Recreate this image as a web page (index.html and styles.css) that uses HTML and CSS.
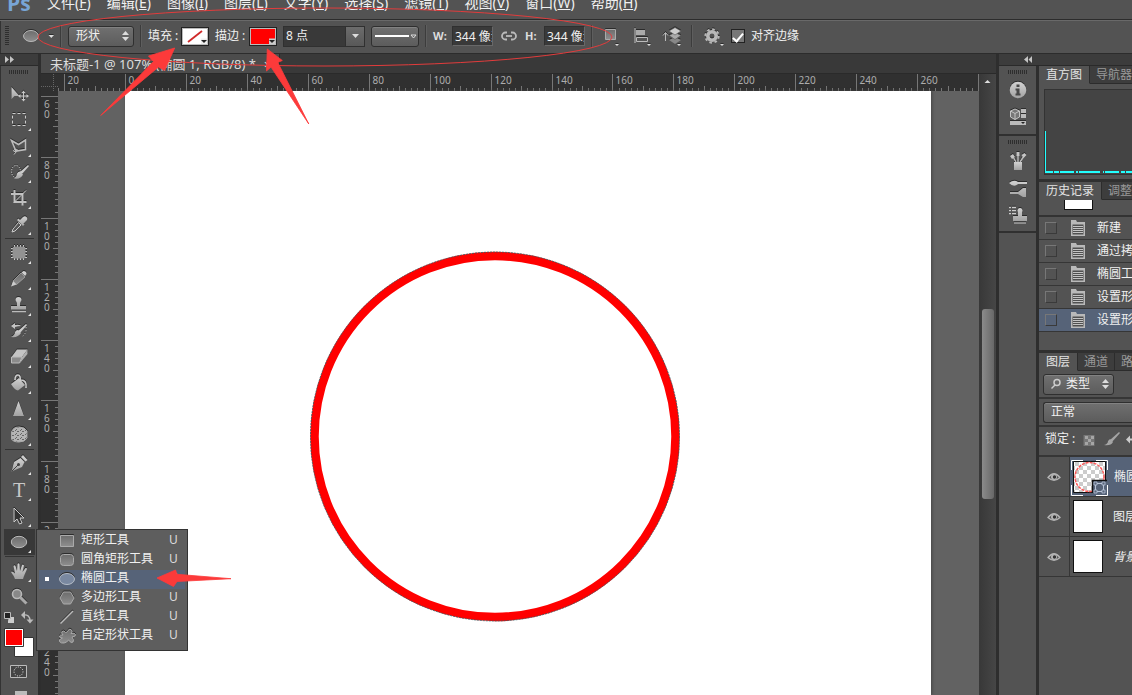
FILE: index.html
```html
<!DOCTYPE html>
<html lang="zh-CN">
<head>
<meta charset="utf-8">
<title>未标题-1</title>
<link rel="stylesheet" href="styles.css">
</head>
<body>
<svg class="defs" aria-hidden="true">
  <defs>
    <linearGradient id="metal" x1="0" y1="0" x2="0" y2="1"><stop offset="0" stop-color="#6c6c6c"/><stop offset="1" stop-color="#8e8e8e"/></linearGradient>
    <linearGradient id="light" x1="0" y1="0" x2="0" y2="1"><stop offset="0" stop-color="#d2d2d2"/><stop offset="1" stop-color="#a2a2a2"/></linearGradient>
    <pattern id="checker" width="8" height="8" patternUnits="userSpaceOnUse"><path d="M0 0h8v8H0z" fill="#fff"/><path d="M0 0h4v4H0zM4 4h4v4H4z" fill="#ccc"/></pattern>
    <pattern id="sponge" width="5" height="4" patternUnits="userSpaceOnUse"><path d="M0 0h5v4H0z" fill="#b4b4b4"/><path d="M0 0h1v1H0zM2 1h2v1H2zM1 3h1v1H1z" fill="#666"/></pattern>
    <symbol id="doc" viewBox="0 0 14 16"><path d="M0 0h5l1 2h8v14H0z" fill="#b9b9b9"/><path d="M1.500 4.500h11v10h-11z" fill="#505050"/><path d="M2 6.500h10M2 8.500h10M2 10.500h10M2 12.500h10" stroke="#c4c4c4"/></symbol>
    <symbol id="eye" viewBox="0 0 14 12"><path d="M1 6.500Q7 -1 13 6.500Q7 12 1 6.500z" fill="#555" stroke="#b5b5b5" stroke-width="1.300"/><circle cx="7" cy="6" r="3" fill="#b5b5b5"/><circle cx="7.500" cy="6" r="1.700" fill="#333"/></symbol>
  </defs>
</svg>

<div class="app">
  <nav class="menubar">
    <span class="logo">Ps</span>
    <a href="#">文件(<u>F</u>)</a><a href="#">编辑(<u>E</u>)</a><a href="#">图像(<u>I</u>)</a><a href="#">图层(<u>L</u>)</a><a href="#">文字(<u>Y</u>)</a><a href="#">选择(<u>S</u>)</a><a href="#">滤镜(<u>T</u>)</a><a href="#">视图(<u>V</u>)</a><a href="#">窗口(<u>W</u>)</a><a href="#">帮助(<u>H</u>)</a>
  </nav>

  <div class="options">
    <span class="grip-v"></span>
    <button class="opt-tool" aria-label="椭圆工具"><svg class="raised" width="39" height="20"><ellipse cx="16" cy="10" rx="7.500" ry="5.500" fill="url(#metal)" stroke="#b9b9b9"/><path d="M33.500 9h5.500l-2.700 3z" fill="#ddd"/></svg></button>
    <span class="rule"></span>
    <span class="field select-box mode"><select aria-label="工具模式"><option>形状</option></select><svg width="7" height="10"><path d="M0 4L3.500 0 7 4zM0 6l3.500 4L7 6z" fill="#ddd"/></svg></span>
    <span class="rule"></span>
    <label class="name" for="fill">填充 :</label>
    <button class="swatch" id="fill"><svg width="28" height="19"><path d="M2 2h24v15H2z" fill="#fff"/><path d="M7 15L21 4" stroke="#d02a2a" stroke-width="1.800"/><path d="M20 11.500h6V17h-6z" fill="#eee"/><path d="M20 13h6l-3 3z" fill="#222"/></svg></button>
    <label class="name wide" for="stroke">描边 :</label>
    <button class="swatch" id="stroke"><svg width="28" height="19"><path d="M2 2h24v15H2z" fill="red"/><path d="M20 11.500h6V17h-6z" fill="#ccc"/><path d="M20 13h6l-3 3z" fill="#222"/></svg></button>
    <span class="combo"><input aria-label="描边宽度" value="8 点"><button aria-label="展开"><svg width="7" height="4"><path d="M0 0h7L3.500 4z" fill="#ddd"/></svg></button></span>
    <button class="field line-type" aria-label="描边类型"><svg width="46" height="19"><path d="M3 9h34" stroke="#fff" stroke-width="2"/><path d="M39 8h5l-2.500 3z" fill="none" stroke="#ddd"/></svg></button>
    <span class="rule"></span>
    <label class="dim" for="w">W:</label><input class="num" id="w" value="344 像素">
    <svg class="link" width="20" height="12"><g fill="none" stroke="#bbb" stroke-width="1.800"><path d="M8 2.500H6.500a3.500 3.500 0 0 0 0 7H8M12 2.500h1.500a3.500 3.500 0 0 1 0 7H12"/><path d="M7 6h6"/></g></svg>
    <label class="dim" for="h">H:</label><input class="num" id="h" value="344 像素">
    <span class="rule"></span>
    <button aria-label="路径操作"><svg class="raised" width="24" height="22"><path d="M6.500 4.500h10v10h-10z" fill="url(#metal)" stroke="#aaa"/><path d="M16 19h4l-2 2z" fill="#ddd"/></svg></button>
    <button aria-label="路径对齐方式"><svg class="raised" width="26" height="22"><path d="M6 3v15" stroke="#ccc"/><path d="M7 5h9v5H7z" fill="#aaa"/><path d="M7.500 12.500h11v4h-11z" fill="#555" stroke="#bbb"/><path d="M18 19h4l-2 2z" fill="#ddd"/></svg></button>
    <button aria-label="路径排列方式"><svg class="raised" width="24" height="22"><path d="M4.500 16V8M2 10.500l2.500-3 2.500 3" stroke="#bbb" fill="none"/><path d="M8 15l6-3 6 3-6 4z" fill="#888"/><path d="M8 10.500l6-3 6 3-6 4z" fill="#aaa" stroke="#555" stroke-width=".6"/><path d="M8 6l6-3.500 6 3.500-6 4z" fill="#ccc" stroke="#555" stroke-width=".6"/><path d="M16 19h4l-2 2z" fill="#ddd"/></svg></button>
    <span class="rule"></span>
    <button aria-label="设置"><svg class="raised" width="26" height="22"><circle cx="13" cy="11" r="4.200" fill="none" stroke="#b8b8b8" stroke-width="3.600"/><circle cx="13" cy="11" r="6.700" fill="none" stroke="#b8b8b8" stroke-width="2" stroke-dasharray="2.600 2.660"/><path d="M21 19h4l-2 2z" fill="#ddd"/></svg></button>
    <input type="checkbox" class="tick" id="snap" checked><label for="snap">对齐边缘</label>
  </div>

  <div class="workspace">
    <aside class="toolbox">
      <div class="strip"><svg width="9" height="7"><path d="M0 0l4 3.500L0 7zM5 0l4 3.500L5 7z" fill="#c4c4c4"/></svg></div>
      <div class="grip"></div>
      <button class="tool" aria-label="移动工具"><svg><path d="M11.500 6v12l3-3h5z" fill="url(#light)"/><path d="M23.500 10.500v9M19 15h9" stroke="#c8c8c8"/><path d="M21.500 12l2-2.500 2 2.500zM21.500 18l2 2.500 2-2.500zM20.500 13L18 15l2.500 2zM26.500 13l2.500 2-2.500 2z" fill="#c8c8c8"/></svg></button>
      <button class="tool more" aria-label="矩形选框工具"><svg><path d="M12.500 6.500h13v12h-13z" fill="none" stroke="#ccc" stroke-dasharray="3 2"/></svg></button>
      <button class="tool more" aria-label="套索工具"><svg><path d="M11.500 7.500L18.500 11.500 25.500 7v9.500L16 18z" fill="none" stroke="#bcbcbc" stroke-width="1.600"/><path d="M15 16.500q3-1 2.500 1T14 18.500q-1.500-1.500 1-2M16 19l-2 2.500" fill="none" stroke="#bcbcbc"/></svg></button>
      <button class="tool more" aria-label="快速选择工具"><svg><ellipse cx="16" cy="12.500" rx="4.500" ry="6" fill="none" stroke="#ddd" stroke-dasharray="1 1.500"/><path d="M28 6l1 1-7 8-2-2z" fill="#ccc"/><path d="M20 12.500l3 3q-2 5-9 4 3-2 3-5 1-2 3-2z" fill="url(#light)"/></svg></button>
      <button class="tool more" aria-label="裁剪工具"><svg><path d="M14.500 5v12h12M11 9h11.500v11.500" fill="none" stroke="#bfbfbf" stroke-width="2"/><path d="M14 17.500L26 5.500" stroke="#ccc"/></svg></button>
      <button class="tool more" aria-label="吸管工具"><svg><path d="M20 9l3-3q2-1.500 3.500 0t0 3.500l-3 3 1 1-1.500 1.500-6-6 1.500-1.500z" fill="url(#light)"/><path d="M18.500 11.500l2.500 2.500-6 6-3 1 1-3z" fill="#555" stroke="#ccc"/></svg></button>
      <hr>
      <button class="tool more" aria-label="修补工具"><svg><path d="M14.500 5v15M17.500 5v15M20.500 5v15M23.500 5v15M11 8.500h16M11 11.500h16M11 14.500h16M11 17.500h16" stroke="#c8c8c8"/><rect x="12.500" y="6.500" width="13" height="12" rx="2" fill="#929292"/></svg></button>
      <button class="tool more" aria-label="铅笔工具"><svg><path d="M21.500 6.500l2-1.500q3 0 3 3l-1.500 2z" fill="#d0d0d0"/><path d="M21 7l4 4-8.500 7.500-3.500-3.500z" fill="url(#metal)" stroke="#aaa" stroke-width=".8"/><path d="M13 15l3.500 3.500L11 20.500z" fill="#ccc"/></svg></button>
      <button class="tool more" aria-label="仿制图章工具"><svg><path d="M18.500 5a3 3 0 0 1 3 3l-1.500 3v3h6v3.500H11V14h6v-3l-1.500-3a3 3 0 0 1 3-3z" fill="url(#light)"/><path d="M12 19.500h14" stroke="#bbb" stroke-width="1.500"/></svg></button>
      <button class="tool more" aria-label="历史记录画笔工具"><svg><path d="M11 8l4-3v2q4-1 6 1-3 0-6 1v2z" fill="#c4c4c4"/><path d="M26 6l1 1-7 8-2-2z" fill="#ccc"/><path d="M18 12l3 3q-3 5-10 4 4-2 4-5 1-2 3-2z" fill="url(#light)"/><path d="M26 9q1 7-5 10" stroke="#ccc" fill="none" stroke-dasharray="1 2"/></svg></button>
      <button class="tool more" aria-label="橡皮擦工具"><svg><path d="M17 5.500h10.500L22 13H11.500z" fill="#c5c5c5"/><path d="M22 13l5.500-7.500v4.500L20 19z" fill="#b0b0b0"/><path d="M11.500 13H22l-2.500 6h-8z" fill="#8c8c8c" stroke="#bbb"/></svg></button>
      <button class="tool more" aria-label="油漆桶工具"><svg><path d="M11 14l8-6 6 7-7 5.500q-3 0-7-6.500z" fill="url(#light)"/><path d="M15 10q0-5 3-5t2 7M21 10q6 0 5 8" fill="none" stroke="#ccc" stroke-width="1.600"/></svg></button>
      <button class="tool more" aria-label="锐化工具"><svg><path d="M18.500 5L24 20H13z" fill="url(#light)"/></svg></button>
      <button class="tool more" aria-label="海绵工具"><svg><path d="M11.500 10Q13 5 19 5t8 4v7q-2 4-8 4t-7.500-3z" fill="url(#sponge)" stroke="#aaa"/></svg></button>
      <hr>
      <button class="tool more" aria-label="钢笔工具"><svg><path d="M21 6l2-2 4.500 5-2 1.500z" fill="#ccc"/><path d="M20.500 7l4 4-2.500 5-10.500 4.500L14 11z" fill="url(#light)"/><path d="M12 20l6-6" stroke="#444"/><circle cx="18.500" cy="13.500" r="1.500" fill="#444"/></svg></button>
      <button class="tool more letter" aria-label="文字工具">T</button>
      <button class="tool more" aria-label="路径选择工具"><svg><path d="M14 5v14l3-3 2.500 5 2.500-1-2-5h4z" fill="#333" stroke="#ccc"/></svg></button>
      <div class="tool-group">
        <button class="tool more active" aria-label="椭圆工具"><svg><ellipse cx="19" cy="13" rx="7.700" ry="5.700" fill="url(#metal)" stroke="#bbb"/></svg></button>
        <ul class="flyout">
          <li><svg><path d="M1.500 3.500h13v11h-13z" fill="url(#metal)" stroke="#aaa"/></svg><span>矩形工具</span><kbd>U</kbd></li>
          <li><svg><rect x="1.500" y="3.500" width="13" height="11" rx="3" fill="url(#metal)" stroke="#aaa"/></svg><span>圆角矩形工具</span><kbd>U</kbd></li>
          <li class="current"><svg><ellipse cx="8" cy="9" rx="7.500" ry="5.500" fill="#7988a0" stroke="#b5bdc8"/></svg><span>椭圆工具</span><kbd>U</kbd></li>
          <li><svg><path d="M1 9l3.500-6h7L15 9l-3.500 6h-7z" fill="url(#metal)" stroke="#aaa"/></svg><span>多边形工具</span><kbd>U</kbd></li>
          <li><svg><path d="M1.500 15.500L14 3" stroke="#bbb" stroke-width="1.500"/></svg><span>直线工具</span><kbd>U</kbd></li>
          <li><svg><path d="M3 4.500Q5 3 6.500 5.500 8 6 9 3.500 11 1 12.500 3T12 6.500q4-1 4.500 1T13 10q2.500 3 1 5t-4.500-2Q8 15.500 5 16t-4.500-1.500T3.500 11Q0 10.500.500 9T4 8Q2 6 3 4.500z" fill="url(#metal)" stroke="#aaa"/></svg><span>自定形状工具</span><kbd>U</kbd></li>
        </ul>
      </div>
      <hr>
      <button class="tool more" aria-label="抓手工具"><svg><path d="M15 21q-1-3-4-7 1-1.500 4 1.500L13.500 8q1-1.500 2 0l1.500 5 .5-7q1-1.500 2 0l.5 7L22 7q1-1 2 .500L22.500 14l3-4q1.500-.5 1.500 1l-3 7-1 3z" fill="url(#light)"/></svg></button>
      <button class="tool" aria-label="缩放工具"><svg><circle cx="17" cy="10" r="4.500" fill="#888" stroke="#b8b8b8" stroke-width="1.600"/><path d="M20.500 13.500l6 6" stroke="#aaa" stroke-width="3"/></svg></button>
      <svg class="mini" width="38" height="17"><path d="M9 7h5v6H8V11z" fill="#ccc"/><path d="M4.500 2.500h6v6h-6z" fill="#222" stroke="#bbb"/><path d="M23 5q7-1 7 6" fill="none" stroke="#bbb" stroke-width="1.500"/><path d="M25 1v8l-4-4zM26.500 9.500h7l-3.500 4z" fill="#bbb"/></svg>
      <svg class="colors" width="38" height="30"><path d="M14.500 10.500h19v19h-19z" fill="#fff" stroke="#333"/><path d="M4.500 1.500h19v18h-19z" fill="#fff" stroke="#333"/><path d="M6 3h16v15H6z" fill="red"/></svg>
      <svg class="modes" width="38" height="46"><path d="M10.500 8.500h16v12h-16z" fill="#444" stroke="#bbb"/><circle cx="18.500" cy="14.500" r="4.500" fill="none" stroke="#eee" stroke-dasharray="1 1.500"/><path d="M15 34h12v10H15z" fill="#bbb"/></svg>
    </aside>

    <main class="document">
      <div class="tabs-row"><div class="doc-tab"><span>未标题-1 @ 107% (椭圆 1, RGB/8) *</span><button aria-label="关闭">×</button></div></div>
      <div class="stage">
        <svg class="corner" width="17" height="17"><path d="M0 12.500h17M12.500 0v17" stroke="#666" stroke-dasharray="1 1"/></svg>
        <svg class="ruler-x" id="ruler-x"></svg>
        <svg class="ruler-y" id="ruler-y"></svg>
        <div class="pasteboard">
          <div class="page"><svg><circle cx="370" cy="345.500" r="180.500" fill="none" stroke="red" stroke-width="8.500"/><circle cx="370" cy="345.500" r="184.500" fill="none" stroke="#27666c" stroke-dasharray="2 1" stroke-width=".8"/></svg></div>
        </div>
        <div class="scrollbar"><svg width="17" height="16"><path d="M5.500 9h6L8.500 6z" fill="#ddd"/></svg><div class="thumb"></div></div>
      </div>
    </main>

    <section class="side">
      <div class="strip right"><svg width="8" height="7"><path d="M4 0L0 3.500 4 7zM8 0L4.500 3.500 8 7z" fill="#c4c4c4"/></svg></div>
      <div class="side-body">
        <div class="dock">
          <div class="dock-group info">
            <div class="grip"></div>
            <button aria-label="信息"><svg><circle cx="19" cy="10" r="8.300" fill="url(#light)"/><path d="M17.500 4.500h3v2.500h-3zM16.500 8.500h4v5h1v2h-5v-2h1v-3h-1z" fill="#484848"/></svg></button>
            <button aria-label="属性"><svg><path d="M11.500 6l4.500-2 4.500 2v6L16 14.500 11.500 12z" fill="#777" stroke="#c4c4c4"/><path d="M11.500 6L16 8.500 20.500 6M16 8.500v6" stroke="#c4c4c4" fill="none"/><path d="M22 4h5v4h-5zM22 9h5v4h-5zM11 16h16v4H11z" fill="#bbb"/><path d="M22 17h4l-2 2z" fill="#222"/></svg></button>
          </div>
          <div class="dock-group brushes">
            <div class="grip"></div>
            <button aria-label="画笔预设"><svg><path d="M15 11h8v8h-8z" fill="url(#light)"/><path d="M17 11l-4-7M19 11V2M21 11l4-6" stroke="#bbb" stroke-width="1.500"/><path d="M11 5l3-2 2 3-3 2zM17.500 1h3v4h-3zM22.500 4l3-2 2 2-3 3z" fill="#c4c4c4"/></svg></button>
            <button aria-label="画笔"><svg><path d="M10 5q5-4 9-1h9v2h-9q-4 4-9-1zM11 14h8l5-4h3v9h-3l-5-3h-8z" fill="url(#light)"/></svg></button>
            <button aria-label="仿制源"><svg><path d="M10 2.500h2M13 2.500h4M10 5.500h2M13 5.500h4M10 8.500h2M13 8.500h4" stroke="#ccc" stroke-width="1.500"/><path d="M21 3a2.500 2.500 0 0 1 2 4v4h5v5H14v-5h5V7a2.500 2.500 0 0 1 2-4z" fill="url(#light)"/><path d="M15 18h12" stroke="#ccc"/></svg></button>
          </div>
        </div>

        <div class="panels">
          <section class="panel histogram">
            <div class="tabs"><button class="on">直方图</button><button>导航器</button></div>
            <div class="graph"><svg><path d="M.5 41v42" stroke="#2ff"/><path d="M0 82h8M9 82h5M15 82h14M31 82h2M34 82h21M58 82h1M60 82h14M76 82h4M81 82h20" stroke="#2ff" stroke-width="2"/></svg></div>
          </section>
          <section class="panel history">
            <div class="tabs"><button class="on">历史记录</button><button>调整</button></div>
            <div class="snapshot"><i></i></div>
            <ul>
              <li><i></i><svg><use href="#doc"/></svg><span>新建</span></li>
              <li><i></i><svg><use href="#doc"/></svg><span>通过拷贝的图层</span></li>
              <li><i></i><svg><use href="#doc"/></svg><span>椭圆工具</span></li>
              <li><i></i><svg><use href="#doc"/></svg><span>设置形状图层填充</span></li>
              <li class="current"><i></i><svg><use href="#doc"/></svg><span>设置形状描边</span></li>
            </ul>
          </section>
          <section class="panel layers">
            <div class="tabs"><button class="on">图层</button><button>通道</button><button>路径</button></div>
            <div class="row filter"><span class="field select-box kind"><svg width="12" height="12"><circle cx="7" cy="4.500" r="3" fill="none" stroke="#ccc" stroke-width="1.500"/><path d="M5 7l-3.500 3.500" stroke="#ccc" stroke-width="1.500"/></svg><select aria-label="类型"><option>类型</option></select><svg width="7" height="10"><path d="M0 4L3.500 0 7 4zM0 6l3.500 4L7 6z" fill="#ddd"/></svg></span></div>
            <div class="row blend"><span class="field select-box"><select aria-label="混合模式"><option>正常</option></select></span></div>
            <div class="row lock"><span>锁定 :</span><svg width="50" height="18"><path d="M.5 5h11v11H.500z" fill="#777"/><path d="M2 6h3v3H2zM8 6h3v3H8zM5 9h3v3H5zM2 12h3v3H2zM8 12h3v3H8z" fill="#a5a5a5"/><path d="M36 2l1 1-8 9-2-2zM27 9l3 3q-2 4-9 3 4-1 4-4z" fill="#a5a5a5"/><path d="M43 9.500l4-4v3h4v2h-4v3z" fill="#ccc"/></svg></div>
            <ul>
              <li class="current"><svg class="eye"><use href="#eye"/></svg><svg class="thumb-shape" width="38" height="38"><path d="M2.500 3.500h32v31h-32z" fill="url(#checker)" stroke="#111"/><circle cx="18.500" cy="19" r="14.500" fill="none" stroke="#f55" stroke-width="1.400" stroke-dasharray="3 1"/><path d="M21 22h15v15H21z" fill="#566378"/><path d="M36 22.500H21.500V35" stroke="#111" stroke-width="1.500" fill="none"/><path d="M24.500 25.500h8v8h-8z" fill="none" stroke="#b8c4d8"/><path d="M23 24h3v3h-3zM31 24h3v3h-3zM23 32h3v3h-3zM31 32h3v3h-3z" fill="#566378" stroke="#b8c4d8" stroke-width=".8"/><path d="M.5 12V2.500H12M25 2.500h11.500V12M.5 27v10.500H12M25 37.500h11.500V27" fill="none" stroke="#fff"/></svg><span>椭圆 1</span></li>
              <li><svg class="eye"><use href="#eye"/></svg><i></i><span>图层 1</span></li>
              <li><svg class="eye"><use href="#eye"/></svg><i></i><span><em>背景</em></span></li>
            </ul>
          </section>
        </div>
      </div>
    </section>
  </div>

  <svg class="notes" width="1132" height="695" aria-hidden="true">
    <ellipse cx="325" cy="37" rx="287" ry="29" fill="none" stroke="#e23c3c"/>
    <g fill="#fc3a3a" stroke="#fc3a3a" stroke-width=".8" stroke-linejoin="round">
      <path d="M174.700 48L148.500 56l5 5.500-52.800 54L158.500 67l6 3.500z"/>
      <path d="M267.300 49l15 11.500-4.500 2 31 61.500L271 67l-4.500 4z"/>
      <path d="M157 578l18.500-8 1.500 4.300 54 4.400-54 2.800-3.500 5z"/>
    </g>
  </svg>
</div>
<script src="rulers.js"></script>
</body>
</html>
```
FILE: styles.css
```css
* { box-sizing: border-box; }
body {
  margin: 0;
  overflow: hidden;
  background: #535353;
  color: #f0f0f0;
  font: 12px/16px "Noto Sans", "Noto Sans CJK SC", sans-serif;
}
button, input, select { font: inherit; color: inherit; margin: 0; padding: 0; border: 0; background: none; border-radius: 0; min-width: 0; }
select { appearance: none; outline: 0; }
ul { list-style: none; margin: 0; padding: 0; }
svg { display: block; flex: none; }
.defs { position: absolute; width: 0; height: 0; }
.raised, .tool svg, .flyout svg, .dock svg { filter: drop-shadow(0 -1px 0 #2c2c2c); }

.app { position: relative; display: flex; flex-direction: column; height: 100vh; overflow: hidden; }

.menubar {
  display: flex; align-items: flex-end; gap: 16px;
  height: 20px; padding: 0 0 4px 7px; overflow: hidden;
  font-size: 14px; line-height: 24px; border-bottom: 1px solid #2c2c2c; flex: none;
}
.menubar a { color: #f0f0f0; text-decoration: none; white-space: nowrap; }
.logo { width: 24px; color: #78a5d6; font: bold 21px/24px "Open Sans", sans-serif; }

.options {
  display: flex; align-items: center; gap: 6px; flex: none;
  height: 34px; padding: 0 0 2px 5px; overflow: hidden; white-space: nowrap;
  border-top: 1px solid #696969; border-bottom: 1px solid #2c2c2c; box-shadow: inset 1px 0 #333;
}
.options > * { flex: none; }
.grip-v { width: 4px; height: 20px; background: repeating-linear-gradient(#2e2e2e 0 1px, #535353 1px 2px); }
.rule { width: 2px; height: 22px; background: #3c3c3c; border-right: 1px solid #5e5e5e; }
.field {
  display: flex; align-items: center; height: 21px;
  border: 1px solid #2f2f2f; border-radius: 3px;
  background: linear-gradient(#707070, #5c5c5c); box-shadow: inset 0 1px #828282;
}
.select-box select { flex: 1; }
.mode { width: 66px; padding: 0 4px 0 7px; }
.name { width: 27px; }
.name.wide { width: 28px; }
.swatch { width: 28px; height: 19px; background: #bbb; border: 1px solid #222; overflow: hidden; }
.swatch svg { margin: -1px; }
.combo { display: flex; width: 82px; height: 21px; border: 1px solid #303030; background: #393939; }
.combo input { flex: 1; padding-left: 2px; }
.combo button { display: grid; place-items: center; width: 19px; background: linear-gradient(#6c6c6c, #585858); border-left: 1px solid #303030; }
.line-type { width: 48px; }
.dim { width: 13px; font-size: 11px; font-weight: bold; color: #ddd; }
.num { width: 41px; height: 20px; padding: 0 0 0 2px; background: #393939; border: 1px solid #303030; border-right-color: #686868; border-bottom-color: #686868; }
.tick { appearance: none; width: 14px; height: 14px; border: 1px solid #222; background: #777; display: grid; place-items: center; }
.tick:checked::before { content: ""; width: 4px; height: 9px; border: solid #fff; border-width: 0 2px 2px 0; transform: rotate(40deg); }

.workspace { display: flex; flex: 1; min-height: 0; background: #2e2e2e; gap: 3px; }
.strip { display: flex; align-items: center; height: 12px; padding-left: 5px; background: #3c3c3c; border-bottom: 1px solid #2a2a2a; flex: none; }
.strip.right { justify-content: flex-end; padding-right: 100px; }
.grip { flex: none; height: 4px; width: 20px; margin: 4px auto 7px; background: repeating-linear-gradient(90deg, #2e2e2e 0 1px, #535353 1px 2px); }

.toolbox { display: flex; flex-direction: column; width: 38px; background: #535353; box-shadow: inset 1px 0 #333; flex: none; }
.tool { position: relative; flex: none; display: block; width: 38px; height: 26px; }
.tool svg { width: 38px; height: 26px; }
.more::after { content: ""; position: absolute; right: 7px; bottom: 2px; border: solid transparent; border-width: 0 0 3px 3px; border-bottom-color: #e4e4e4; }
.letter { font: 20px/26px "Liberation Serif", serif; color: #c8c8c8; }
.active { background: linear-gradient(#383838, #383838) 4px 0 / 31px 26px no-repeat; }
.toolbox hr { flex: none; width: 29px; height: 1px; margin: 1px auto; border: 0; background: #333; }
.tool-group { position: relative; flex: none; }

.flyout {
  position: absolute; z-index: 2; left: 36px; top: 0; width: 152px; padding: 2px 2px 4px;
  background: #5e5e5e; border: 1px solid #333;
}
.flyout li { display: grid; grid-template-columns: 20px 16px 1fr 16px; height: 19px; line-height: 15px; }
.flyout li span { padding-left: 6px; white-space: nowrap; }
.flyout svg { width: 18px; height: 18px; }
.flyout kbd { font: 12px/15px "Noto Sans", sans-serif; color: #ddd; }
.flyout .current { background: #566378; }
.flyout li::before { content: ""; }
.flyout .current::before { width: 4px; height: 4px; margin: 7px 0 0 6px; background: #fff; }

.document { display: flex; flex-direction: column; flex: 1; min-width: 0; }
.tabs-row { display: flex; height: 20px; background: #393939; border-bottom: 1px solid #2a2a2a; flex: none; }
.doc-tab { display: flex; align-items: center; width: 239px; padding-left: 9px; gap: 8px; background: #4c4c4c; border-right: 1px solid #2a2a2a; color: #ddd; font-size: 13px; white-space: nowrap; }
.stage { display: grid; flex: 1; min-height: 0; grid-template: 17px 1fr / 17px 1fr 17px; background: #303030; }
.ruler-x, .ruler-y { width: 100%; height: 100%; overflow: hidden; }
.ruler-y { grid-area: 2 / 1; }
.ruler-x text, .ruler-y text { fill: #adadad; font-size: 10px; }
.ruler-x path, .ruler-y path { stroke: #777; }
.pasteboard { grid-area: 2 / 2; display: flex; background: #626262; min-height: 0; padding: 0 48px 0 67px; }
.page { flex: 1; min-width: 0; background: #fff; box-shadow: 1px 0 3px #444; }
.page svg { width: 100%; height: 100%; }
.scrollbar { grid-area: 1 / 3 / 3 / 4; display: flex; flex-direction: column; background: linear-gradient(90deg, #383838, #464646); }
.thumb { height: 190px; margin: 219px 2px 0 3px; border-radius: 3px; background: linear-gradient(90deg, #8b8b8b, #686868); }

.side { display: flex; flex-direction: column; width: 133px; flex: none; background: #535353; }
.side-body { display: flex; flex: 1; min-height: 0; }
.dock { width: 40px; border-right: 3px solid #2e2e2e; flex: none; }
.dock-group { border-bottom: 2px solid #303030; }
.dock button { display: block; }
.dock svg { width: 38px; height: 22px; }
.dock-group .grip { margin: 0 auto 4px; }
.info { padding: 4px 0 6px; }
.info button { height: 25px; }
.brushes { padding: 4px 0 2px; }
.brushes button { height: 27px; }

.panels { flex: 1; min-width: 0; overflow: hidden; white-space: nowrap; }
.panel { border-bottom: 3px solid #303030; }
.tabs { display: flex; height: 18px; background: #3d3d3d; }
.tabs button { flex: none; padding: 0 6px; line-height: 18px; color: #999; border-right: 1px solid #2c2c2c; border-bottom: 1px solid #2c2c2c; }
.tabs .on { background: #535353; color: #e4e4e4; border-bottom-color: #535353; padding: 0 7px; }
.histogram { height: 116px; }
.graph { height: 86px; margin: 5px 0 0 5px; background: #444; border: 1px solid #333; border-right: 0; }
.graph svg { width: 100%; height: 84px; }
.history { height: 171px; }
.snapshot { height: 17px; padding-left: 25px; border-bottom: 2px solid #333; }
.snapshot i { display: block; width: 29px; height: 10px; background: #fff; border: 1px solid #111; border-top: 0; }
.history li { display: flex; align-items: center; height: 23px; padding-left: 6px; border-bottom: 1px solid #363636; }
.history li i { flex: none; width: 12px; height: 12px; margin-right: 14px; border: 1px solid #3a3a3a; border-top-color: #777; border-left-color: #777; }
.history li svg { width: 14px; height: 16px; margin-right: 12px; }
.history .current { background: #566378; }
.layers { border: 0; }
.row { display: flex; align-items: center; height: 28px; padding-left: 4px; border-bottom: 2px solid #363636; }
.kind { width: 71px; padding: 0 4px 0 6px; gap: 4px; }
.blend .field { flex: 1; padding-left: 7px; border-right: 0; border-radius: 3px 0 0 3px; }
.lock { height: 30px; gap: 8px; padding: 0 0 4px 6px; }
.layers li { display: flex; align-items: center; height: 40px; border-bottom: 1px solid #363636; background: linear-gradient(90deg, #535353 30px, #363636 30px 31px, transparent 31px); }
.layers li.current { background: linear-gradient(90deg, #535353 30px, #363636 30px 31px, #566378 31px); }
.layers .eye { width: 14px; height: 12px; margin: 0 10px 0 8px; }
.layers i { flex: none; width: 30px; height: 33px; margin: 0 10px 0 2px; background: #fff; border: 1px solid #111; }
.thumb-shape { margin-right: 5px; }
.layers em { font-style: italic; }

.notes { position: absolute; left: 0; top: 0; z-index: 3; pointer-events: none; }
```
FILE: rulers.js
```js
const SCALE = 3.0465;
const NS = "http://www.w3.org/2000/svg";

function label(svg, x, y, text) {
  const t = document.createElementNS(NS, "text");
  t.setAttribute("x", x);
  t.setAttribute("y", y);
  t.textContent = text;
  svg.appendChild(t);
}

function drawRuler(id, origin, from, to, vertical) {
  const svg = document.getElementById(id);
  let d = "";
  for (let v = from; v <= to; v += 2) {
    const p = Math.round(origin + v * SCALE) + 0.5;
    const major = v % 20 === 0;
    const len = major ? 17 : v % 10 === 0 ? 5 : 3;
    d += vertical ? `M${17 - len} ${p}H17` : `M${p} ${17 - len}V17`;
    if (!major) continue;
    const text = String(Math.abs(v));
    if (vertical) [...text].forEach((c, i) => label(svg, 3, p + 11 + i * 10, c));
    else label(svg, p + 3, 10, text);
  }
  const path = document.createElementNS(NS, "path");
  path.setAttribute("d", d);
  svg.appendChild(path);
}

drawRuler("ruler-x", 67, -22, 280, false);
drawRuler("ruler-y", -178, 60, 260, true);
```
